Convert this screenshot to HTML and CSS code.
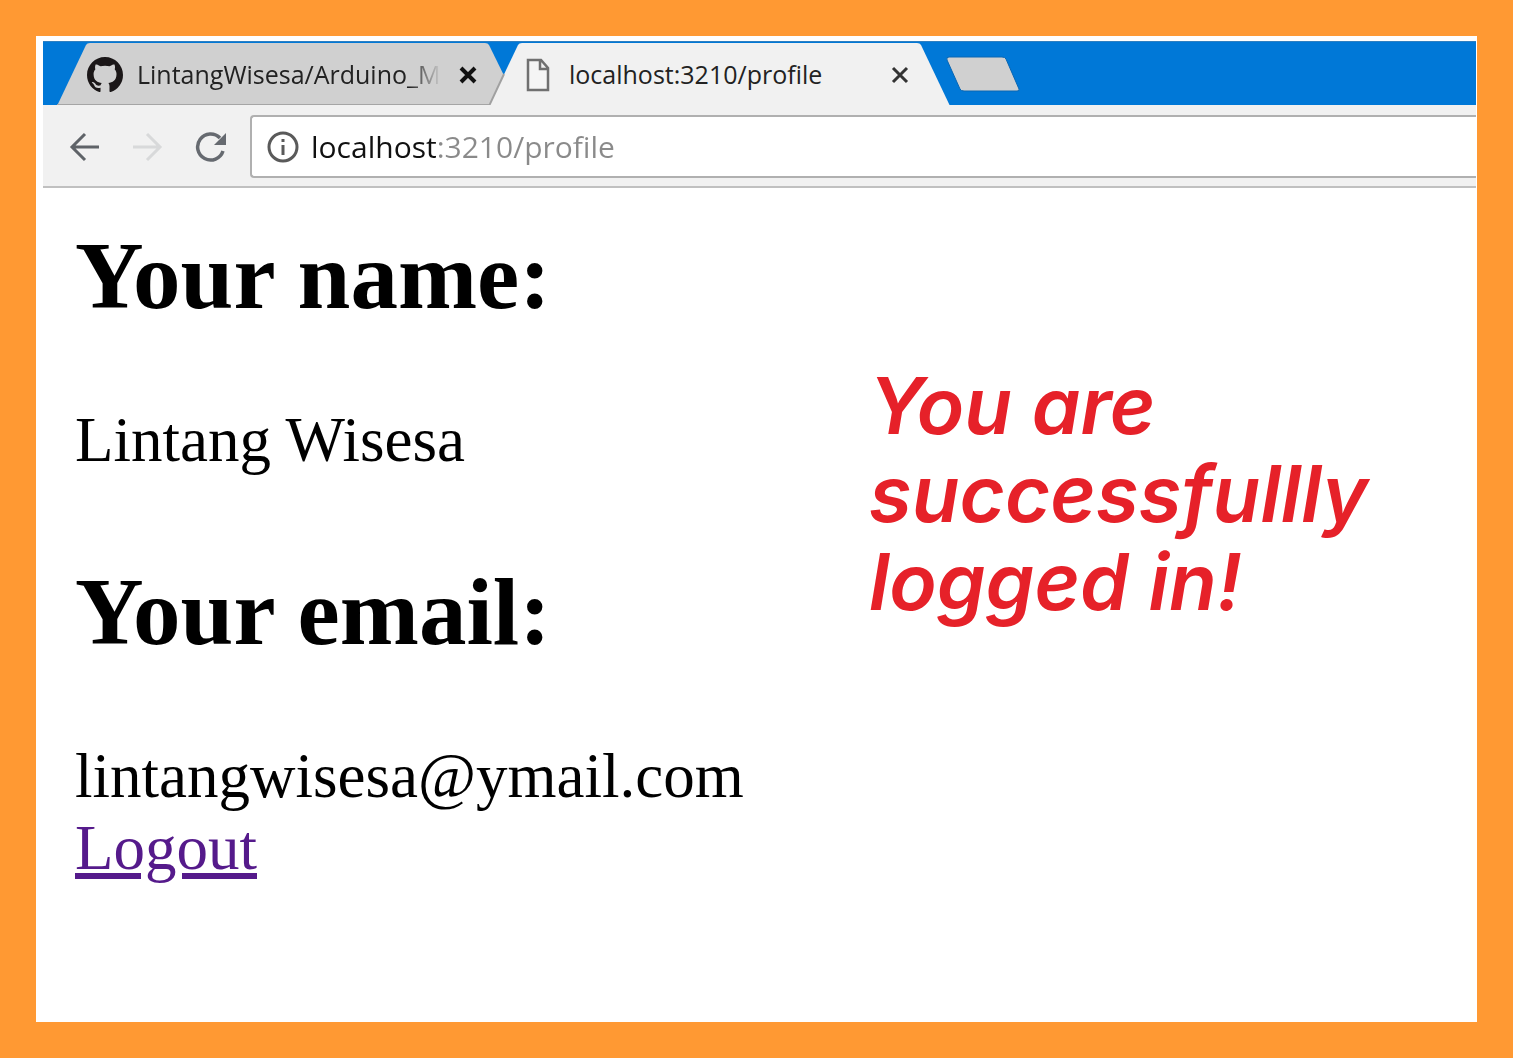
FILE: index.html
```html
<!DOCTYPE html>
<html lang="en">
<head>
<meta charset="utf-8">
<title>Profile</title>
<link rel="stylesheet" href="styles.css">
</head>
<body>
<div class="frame">
  <header class="browser">
    <nav class="tabs" aria-label="Tabs">
      <div class="tab">
        <svg class="tab-shape" viewBox="0 0 462 64" preserveAspectRatio="none" aria-hidden="true">
          <path d="M0 64L29 3Q30 1 33 1H428Q431 1 432 3L462 64Z" fill="#d0d0d0"/>
          <path d="M0 63H462" stroke="#a5a5a5" stroke-width="2"/>
        </svg>
        <svg class="site-icon" viewBox="0 0 16 16" aria-hidden="true"><path fill="#1b1718" d="M8 0C3.58 0 0 3.58 0 8c0 3.54 2.29 6.53 5.47 7.59.4.07.55-.17.55-.38 0-.19-.01-.82-.01-1.49-2.01.37-2.53-.49-2.69-.94-.09-.23-.48-.94-.82-1.13-.28-.15-.68-.52-.01-.53.63-.01 1.08.58 1.23.82.72 1.21 1.87.87 2.33.66.07-.52.28-.87.51-1.07-1.78-.2-3.64-.89-3.64-3.95 0-.87.31-1.59.82-2.15-.08-.2-.36-1.02.08-2.12 0 0 .67-.21 2.2.82.64-.18 1.32-.27 2-.27s1.36.09 2 .27c1.53-1.04 2.2-.82 2.2-.82.44 1.1.16 1.92.08 2.12.51.56.82 1.27.82 2.15 0 3.07-1.87 3.75-3.65 3.95.29.25.54.73.54 1.48 0 1.07-.01 1.93-.01 2.2 0 .21.15.46.55.38A8.01 8.01 0 0 0 16 8c0-4.42-3.58-8-8-8z"/></svg>
        <a class="tab-title faded" href="#">LintangWisesa/Arduino_M</a>
        <button class="close" aria-label="Close tab"><svg viewBox="0 0 18 18"><path d="M2 2L16 16M16 2L2 16" stroke="#111" stroke-width="4"/></svg></button>
      </div>
      <div class="tab">
        <svg class="tab-shape" viewBox="0 0 462 64" preserveAspectRatio="none" aria-hidden="true">
          <path d="M0 64L29 3Q30 1 33 1H428Q431 1 432 3L461 64Z" fill="#f1f1f1"/>
          <path d="M0 64L15 32" stroke="#a0a0a0" stroke-width="2"/>
        </svg>
        <svg class="site-icon" viewBox="0 0 36 36" aria-hidden="true"><path d="M9 3H22L29 11V33H9ZM21 3V12H29" fill="#f5f5f5" stroke="#707070" stroke-width="2.5"/></svg>
        <a class="tab-title" href="#">localhost:3210/profile</a>
        <button class="close" aria-label="Close tab"><svg viewBox="0 0 18 18"><path d="M2 2L16 16M16 2L2 16" stroke="#333" stroke-width="3"/></svg></button>
      </div>
      <button class="new-tab" aria-label="New tab"><svg viewBox="0 0 74 36"><path d="M3 1H56Q59 1 60 3L73 33Q74 35 71 35H18Q15 35 14 33L1 4Q0 1 3 1Z" fill="#d0d0d0" stroke="#0866b3"/></svg></button>
    </nav>
    <div class="toolbar">
      <button class="tool" aria-label="Back"><svg viewBox="0 0 32 32"><path d="M31 16H4M17 3L4 16L17 29" fill="none" stroke="#5f6368" stroke-width="3"/></svg></button>
      <button class="tool" aria-label="Forward" disabled><svg viewBox="0 0 32 32"><path d="M2 16H29M16 3L29 16L16 29" fill="none" stroke="#d8d9da" stroke-width="3"/></svg></button>
      <button class="tool" aria-label="Reload"><svg viewBox="0 0 32 32"><path d="M29 20A13 13 0 1 1 26 7" fill="none" stroke="#666a70" stroke-width="3.5"/><path d="M32 2V14H20Z" fill="#666a70"/></svg></button>
      <label class="address">
        <svg viewBox="0 0 32 32" aria-hidden="true"><circle cx="16" cy="16" r="14" fill="none" stroke="#5a5a5a" stroke-width="3"/><path d="M16 8V11M16 14V24" stroke="#5a5a5a" stroke-width="3"/></svg>
        <input type="text" value="localhost:3210/profile" aria-label="Address">
      </label>
    </div>
  </header>
  <main class="page">
    <section class="profile">
      <h2>Your name:</h2>
      <p>Lintang Wisesa</p>
      <h2>Your email:</h2>
      <p>lintangwisesa@ymail.com<br><a href="#">Logout</a></p>
    </section>
    <p class="message">You are<br>successfullly<br>logged in!</p>
  </main>
</div>
</body>
</html>
```
FILE: styles.css
```css
* {
  box-sizing: border-box;
}

body {
  margin: 0;
  padding: 36px;
  background: #ff9933;
}

button {
  padding: 0;
  border: 0;
  background: none;
}

svg {
  display: block;
  width: 100%;
}

.frame {
  min-height: calc(100vh - 72px);
  padding: 5px 1px 0 7px;
  background: #fff;
}

.browser {
  font-family: "Open Sans", sans-serif;
}

.tabs {
  display: flex;
  align-items: center;
  height: 64px;
  padding-left: 14px;
  background: #0078d7;
  border-top: 1px solid #2f7fc0;
  overflow: hidden;
}

.tab {
  position: relative;
  display: flex;
  align-items: center;
  flex: 0 1 462px;
  min-width: 0;
  height: 64px;
  padding: 2px 42px 0 30px;
}

.tab + .tab {
  margin-left: -30px;
}

.tab-shape {
  position: absolute;
  inset: 0;
  height: 100%;
}

.site-icon {
  position: relative;
  flex: none;
  width: 36px;
  height: 36px;
  margin-right: 14px;
}

.tab-title {
  position: relative;
  flex: 1;
  min-width: 0;
  margin-right: 18px;
  padding-bottom: 2px;
  overflow: hidden;
  color: #222;
  font-size: 25px;
  line-height: 36px;
  text-decoration: none;
  white-space: nowrap;
}

.faded {
  -webkit-mask-image: linear-gradient(to left, transparent, #000 32px);
  mask-image: linear-gradient(to left, transparent, #000 32px);
}

.close {
  position: relative;
  flex: none;
  width: 18px;
}

.new-tab {
  flex: none;
  width: 74px;
  margin-left: -5px;
}

.toolbar {
  display: flex;
  align-items: center;
  gap: 31px;
  padding: 10px 0 8px 25px;
  background: #f1f1f1;
  border-bottom: 2px solid #c0c0c0;
}

.tool {
  flex: none;
  width: 32px;
}

.address {
  display: flex;
  flex: 1;
  align-items: center;
  gap: 12px;
  height: 63px;
  margin-left: -7px;
  padding-left: 15px;
  background: #fff;
  border: 2px solid #b0b0b0;
  border-right: 0;
  border-radius: 4px 0 0 4px;
}

.address svg {
  flex: none;
  width: 32px;
}

.address input {
  flex: 1;
  min-width: 0;
  padding: 0;
  border: 0;
  outline: 0;
  background: linear-gradient(to right, #111 125px, #8a8a8a 125px);
  -webkit-background-clip: text;
  background-clip: text;
  color: transparent;
  font-family: inherit;
  font-size: 30px;
  line-height: 42px;
}

.page {
  display: grid;
  grid-template-columns: 17fr 13fr;
  padding: 32px 0 0 32px;
}

.profile {
  color: #000;
  font-family: "Liberation Serif", serif;
  font-size: 63px;
  line-height: 72px;
}

.profile h2 {
  margin: 0 0 72px;
  font-size: 95px;
  line-height: 112px;
}

.profile p {
  margin: 0 0 80px;
}

.profile p:last-child {
  margin-bottom: 0;
}

.profile a {
  color: #551a8b;
}

.message {
  margin: 142px 0 0;
  color: #e62129;
  font-family: "Inter", sans-serif;
  font-size: 78px;
  font-style: italic;
  font-weight: 600;
  line-height: 88px;
}
```
